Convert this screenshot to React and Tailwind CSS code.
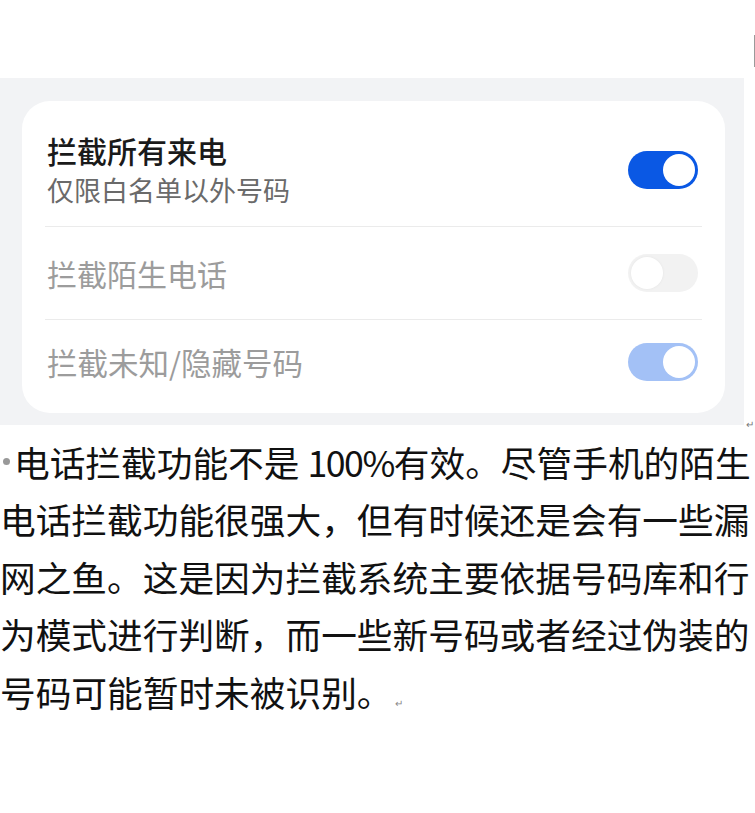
import React from "react";

const cjk = { fontFamily: '"Noto Sans CJK SC", "Noto Sans", sans-serif' };

function Toggle({ state }) {
  if (state === "on") {
    return (
      <div className="w-[70px] h-[38px] rounded-full bg-[#0a58e4] flex items-center justify-end pr-[3px] shrink-0">
        <div className="w-[32px] h-[32px] rounded-full bg-white" />
      </div>
    );
  }
  if (state === "dim") {
    return (
      <div className="w-[70px] h-[38px] rounded-full bg-[#a3c1f6] flex items-center justify-end pr-[3px] shrink-0">
        <div className="w-[32px] h-[32px] rounded-full bg-white" />
      </div>
    );
  }
  return (
    <div className="w-[70px] h-[38px] rounded-full bg-[#f2f2f2] flex items-center justify-start pl-[3px] shrink-0">
      <div className="w-[32px] h-[32px] rounded-full bg-white shadow-[0_0_3px_rgba(0,0,0,0.06)]" />
    </div>
  );
}

export default function App() {
  const lines = [
    "电话拦截功能很强大，但有时候还是会有一些漏",
    "网之鱼。这是因为拦截系统主要依据号码库和行",
    "为模式进行判断，而一些新号码或者经过伪装的",
  ];
  return (
    <div className="relative w-[755px] h-[813px] bg-white overflow-hidden" style={cjk}>
      <div className="absolute left-[754px] top-[35px] w-[1px] h-[32px] bg-[#9a9a9a]" />
      <div className="h-[78px]" />
      <div className="flex items-end">
        <div className="w-[744px] bg-[#f2f3f5] pt-[23px] pb-[12px] pl-[22px] pr-[19px]">
          <div className="bg-white rounded-[28px] pb-[9px]">
            <div className="h-[125px] pt-[13px] flex items-center justify-between pl-[25px] pr-[27px]">
              <div className="flex flex-col">
                <div className="text-[30px] leading-[40px] font-medium text-[#1a1a1a]">拦截所有来电</div>
                <div className="text-[27px] leading-[40px] text-[#6a6a6a]">仅限白名单以外号码</div>
              </div>
              <Toggle state="on" />
            </div>
            <div className="mx-[23px] h-[1px] bg-[#ebebeb]" />
            <div className="h-[92px] flex items-center justify-between pl-[25px] pr-[27px]">
              <div className="text-[30px] leading-[40px] text-[#9c9c9c]">拦截陌生电话</div>
              <Toggle state="off" />
            </div>
            <div className="mx-[23px] h-[1px] bg-[#ebebeb]" />
            <div className="h-[84px] flex items-center justify-between pl-[25px] pr-[27px]">
              <div className="text-[30.5px] leading-[40px] text-[#9c9c9c]">拦截未知/隐藏号码</div>
              <Toggle state="dim" />
            </div>
          </div>
        </div>
        <span className="text-[10px] leading-[10px] text-[#777] ml-[2px] -mb-[4px]">↵</span>
      </div>
      <div className="mt-[8px] text-[35.7px] leading-[57.4px] text-[#111] whitespace-nowrap">
        <div className="flex items-center">
          <span className="inline-block w-[7px] h-[7px] rounded-full bg-[#999] ml-[3px] mr-[4px] shrink-0" />
          <span>
            电话拦截功能不是<span className="ml-[8px] tracking-[-1.5px]">100%</span>有效。尽管手机的陌生
          </span>
        </div>
        {lines.map((l) => (
          <div key={l}>{l}</div>
        ))}
        <div>
          号码可能暂时未被识别。
          <span className="text-[10px] text-[#888] ml-[2px]">↵</span>
        </div>
      </div>
    </div>
  );
}
